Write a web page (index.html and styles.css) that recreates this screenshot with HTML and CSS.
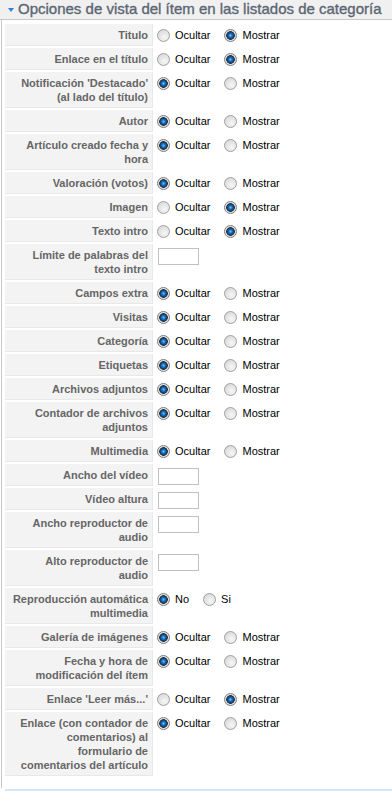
FILE: index.html
```
<!DOCTYPE html>
<html lang="es">
<head>
<meta charset="utf-8">
<link rel="stylesheet" href="styles.css">
</head>
<body>
<div class="pane">
  <h3 class="toggler"><span class="arrow"></span>Opciones de vista del ítem en las listados de categoría</h3>
  <div class="panel">
    <table class="paramlist">
      <tr><td class="key">Titulo</td><td class="val"><label class="opt"><input type="radio" name="r1">Ocultar</label><label class="opt"><input type="radio" name="r1" checked>Mostrar</label></td></tr>
      <tr><td class="key">Enlace en el título</td><td class="val"><label class="opt"><input type="radio" name="r2">Ocultar</label><label class="opt"><input type="radio" name="r2" checked>Mostrar</label></td></tr>
      <tr><td class="key">Notificación 'Destacado' (al lado del título)</td><td class="val"><label class="opt"><input type="radio" name="r3" checked>Ocultar</label><label class="opt"><input type="radio" name="r3">Mostrar</label></td></tr>
      <tr><td class="key">Autor</td><td class="val"><label class="opt"><input type="radio" name="r4" checked>Ocultar</label><label class="opt"><input type="radio" name="r4">Mostrar</label></td></tr>
      <tr><td class="key">Artículo creado fecha y hora</td><td class="val"><label class="opt"><input type="radio" name="r5" checked>Ocultar</label><label class="opt"><input type="radio" name="r5">Mostrar</label></td></tr>
      <tr><td class="key">Valoración (votos)</td><td class="val"><label class="opt"><input type="radio" name="r6" checked>Ocultar</label><label class="opt"><input type="radio" name="r6">Mostrar</label></td></tr>
      <tr><td class="key">Imagen</td><td class="val"><label class="opt"><input type="radio" name="r7">Ocultar</label><label class="opt"><input type="radio" name="r7" checked>Mostrar</label></td></tr>
      <tr><td class="key">Texto intro</td><td class="val"><label class="opt"><input type="radio" name="r8">Ocultar</label><label class="opt"><input type="radio" name="r8" checked>Mostrar</label></td></tr>
      <tr><td class="key">Límite de palabras del texto intro</td><td class="val"><input type="text" class="txt"></td></tr>
      <tr><td class="key">Campos extra</td><td class="val"><label class="opt"><input type="radio" name="r9" checked>Ocultar</label><label class="opt"><input type="radio" name="r9">Mostrar</label></td></tr>
      <tr><td class="key">Visitas</td><td class="val"><label class="opt"><input type="radio" name="r10" checked>Ocultar</label><label class="opt"><input type="radio" name="r10">Mostrar</label></td></tr>
      <tr><td class="key">Categoría</td><td class="val"><label class="opt"><input type="radio" name="r11" checked>Ocultar</label><label class="opt"><input type="radio" name="r11">Mostrar</label></td></tr>
      <tr><td class="key">Etiquetas</td><td class="val"><label class="opt"><input type="radio" name="r12" checked>Ocultar</label><label class="opt"><input type="radio" name="r12">Mostrar</label></td></tr>
      <tr><td class="key">Archivos adjuntos</td><td class="val"><label class="opt"><input type="radio" name="r13" checked>Ocultar</label><label class="opt"><input type="radio" name="r13">Mostrar</label></td></tr>
      <tr><td class="key">Contador de archivos adjuntos</td><td class="val"><label class="opt"><input type="radio" name="r14" checked>Ocultar</label><label class="opt"><input type="radio" name="r14">Mostrar</label></td></tr>
      <tr><td class="key">Multimedia</td><td class="val"><label class="opt"><input type="radio" name="r15" checked>Ocultar</label><label class="opt"><input type="radio" name="r15">Mostrar</label></td></tr>
      <tr><td class="key">Ancho del vídeo</td><td class="val"><input type="text" class="txt"></td></tr>
      <tr><td class="key">Vídeo altura</td><td class="val"><input type="text" class="txt"></td></tr>
      <tr><td class="key">Ancho reproductor de audio</td><td class="val"><input type="text" class="txt"></td></tr>
      <tr><td class="key">Alto reproductor de<br>audio</td><td class="val"><input type="text" class="txt"></td></tr>
      <tr><td class="key">Reproducción automática multimedia</td><td class="val"><label class="opt"><input type="radio" name="r16" checked>No</label><label class="opt"><input type="radio" name="r16">Si</label></td></tr>
      <tr><td class="key">Galería de imágenes</td><td class="val"><label class="opt"><input type="radio" name="r17" checked>Ocultar</label><label class="opt"><input type="radio" name="r17">Mostrar</label></td></tr>
      <tr><td class="key">Fecha y hora de modificación del ítem</td><td class="val"><label class="opt"><input type="radio" name="r18" checked>Ocultar</label><label class="opt"><input type="radio" name="r18">Mostrar</label></td></tr>
      <tr><td class="key">Enlace 'Leer más...'</td><td class="val"><label class="opt"><input type="radio" name="r19">Ocultar</label><label class="opt"><input type="radio" name="r19" checked>Mostrar</label></td></tr>
      <tr><td class="key">Enlace (con contador de comentarios) al formulario de comentarios del artículo</td><td class="val"><label class="opt"><input type="radio" name="r20" checked>Ocultar</label><label class="opt"><input type="radio" name="r20">Mostrar</label></td></tr>
    </table>
  </div>
  <div class="next"></div>
</div>
</body>
</html>
```
FILE: styles.css
```
html, body {
  margin: 0;
  padding: 0;
  background: #fff;
}
body {
  font-family: "Liberation Sans", Arial, sans-serif;
  font-size: 11px;
  color: #000;
}
.pane {
  width: 392px;
}
.toggler {
  margin: 0;
  height: 19px;
  background: #f0f0f0;
  border-bottom: 1px solid #c8c8c8;
  font-size: 15px;
  font-weight: normal;
  -webkit-text-stroke: 0.35px #5b6673;
  color: #5b6673;
  line-height: 18px;
  display: flex;
  align-items: flex-start;
  white-space: nowrap;
}
.arrow {
  width: 0;
  height: 0;
  border-left: 3.5px solid transparent;
  border-right: 3.5px solid transparent;
  border-top: 4px solid #2b84d6;
  margin: 8px 4px 0 8px;
}
.panel {
  border-left: 1px solid #c8c8c8;
  margin-left: 1px;
  padding: 2px 0 10px 1px;
}
.paramlist {
  border-collapse: separate;
  border-spacing: 2px;
}
.key {
  width: 136px;
  background: #f3f3f3;
  border-bottom: 1px solid #e8e8e8;
  border-right: 1px solid #e8e8e8;
  color: #666;
  font-weight: bold;
  text-align: right;
  vertical-align: top;
  padding: 4px 4px 3px 7px;
  line-height: 14px;
}
.val {
  vertical-align: top;
  padding: 4px 0 0 2px;
}
.opt {
  display: inline-flex;
  align-items: center;
  height: 15px;
  margin-right: 14px;
  font-size: 11px;
  line-height: 15px;
}
.opt input {
  -webkit-appearance: none;
  appearance: none;
  flex: none;
  width: 13px;
  height: 13px;
  margin: 0 5px 0 0;
  border-radius: 50%;
  border: 1px solid #a0a0a0;
  background: radial-gradient(circle at 60% 65%, #f6f6f6 0, #dddddd 70%, #c6c6c6 100%);
  box-sizing: border-box;
}
.opt input:checked {
  background: radial-gradient(circle at 50% 50%, #6cc0f0 0, #1f78c4 1.6px, #0c3e76 3.4px, #2a2a2a 4px, #e6e6e6 4.6px, #d3d3d3 100%);
  border-color: #7c7c7c;
}
.txt {
  display: block;
  width: 41px;
  height: 17px;
  box-sizing: border-box;
  border: 1px solid #c0c0c0;
  margin: 0 0 0 1px;
  padding: 0;
}
.next {
  margin: 1px 0 0 5px;
  height: 1px;
  border-top: 2px solid #d4e7f7;
}
```
